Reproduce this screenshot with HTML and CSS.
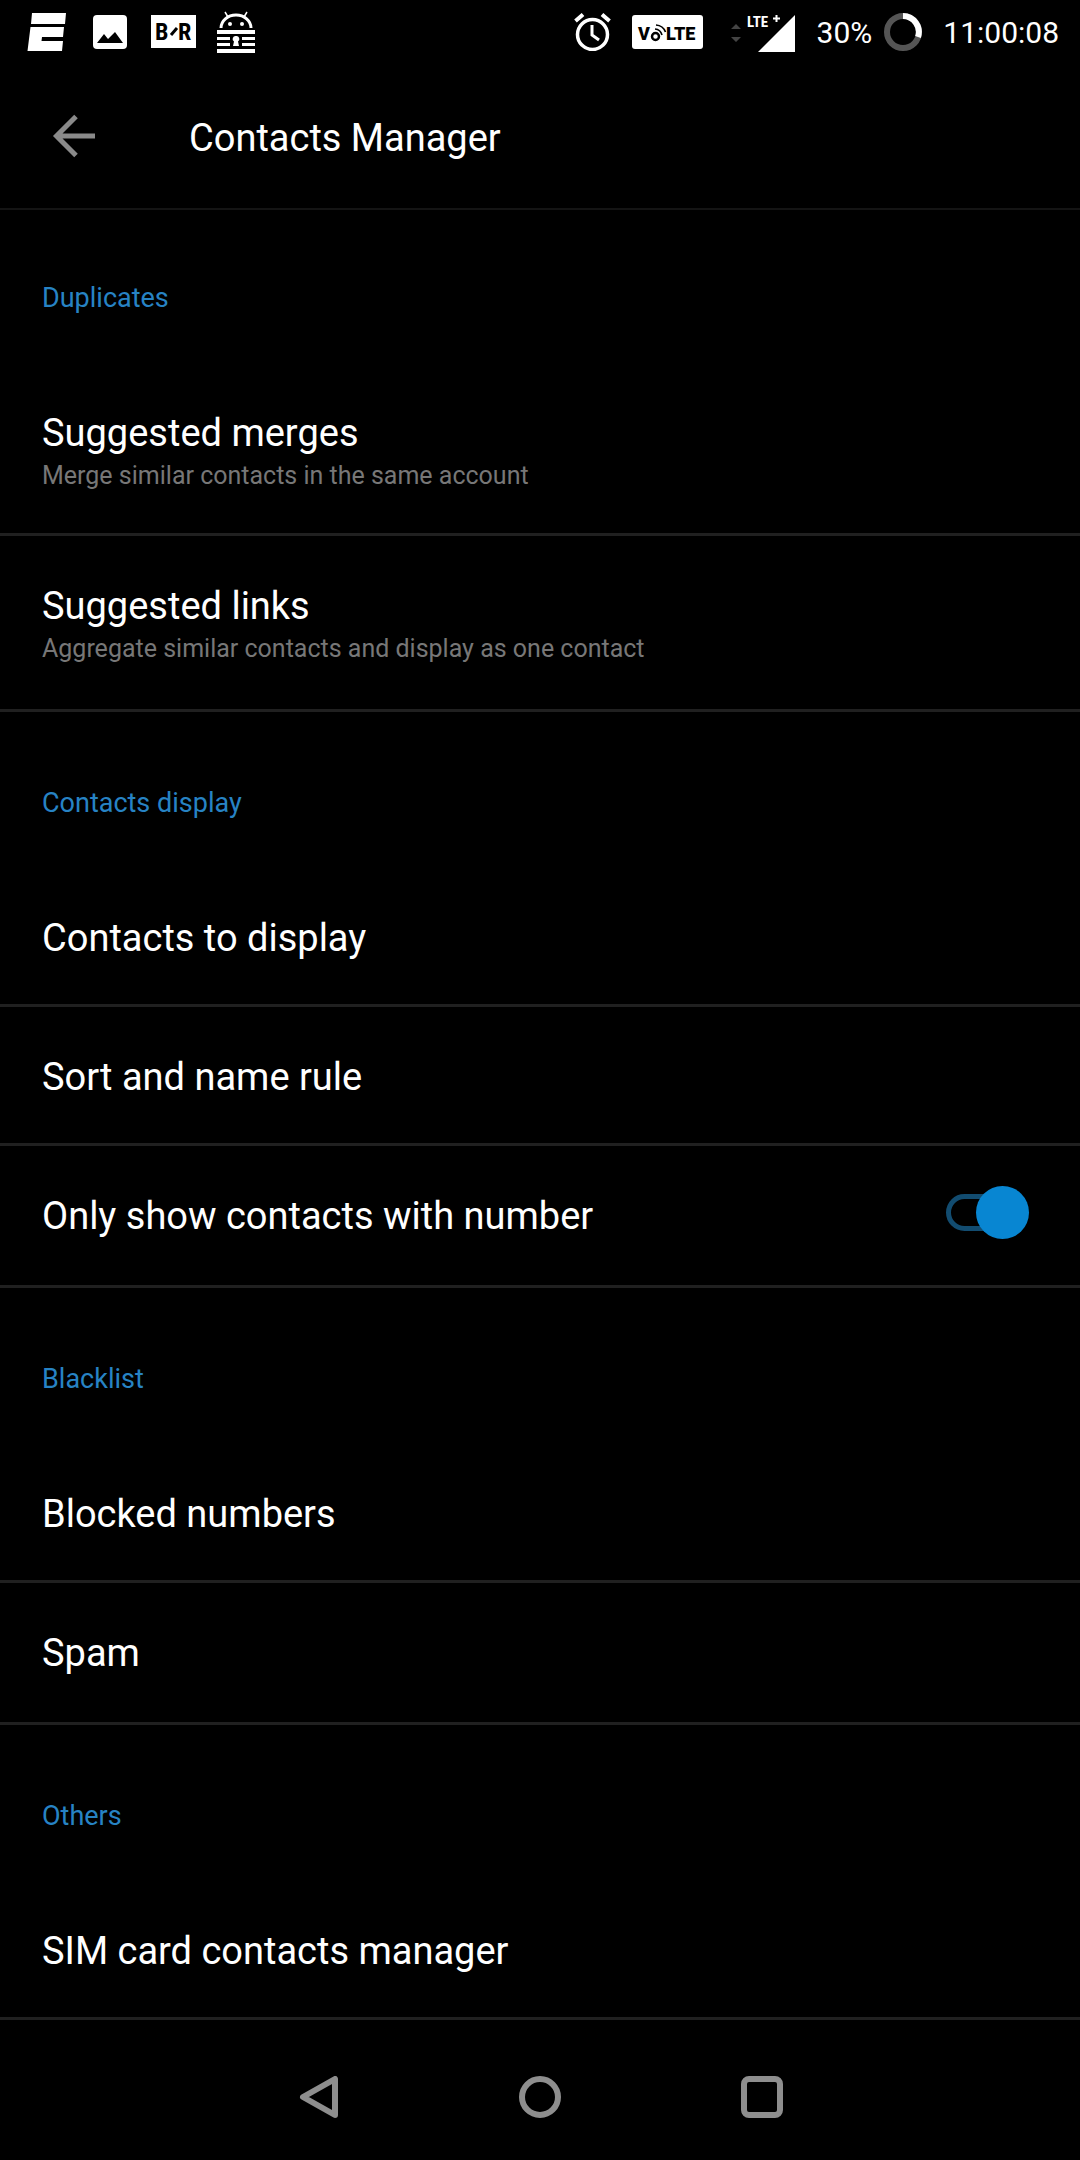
FILE: index.html
```html
<!DOCTYPE html>
<html lang="en">
<head>
<meta charset="utf-8">
<meta name="viewport" content="width=device-width, initial-scale=1">
<title>Contacts Manager</title>
<link rel="stylesheet" href="styles.css">
</head>
<body>
<div class="screen">
  <div class="status">
    <div class="status__notifications">
      <svg width="40" height="40" viewBox="0 0 40 40" fill="#fff" aria-label="Sports">
        <path d="M5 1H39L38 12H4Z M3.500 15H37L36 25H15L14.500 29H36L35 39H0.500Z"/>
      </svg>
      <svg width="34" height="34" viewBox="0 0 34 34" aria-label="Picture">
        <rect width="34" height="34" rx="4" fill="#fff"/>
        <path d="M4 28L11 19L15 24L22 17L30 28Z" fill="#000"/>
      </svg>
      <svg width="45" height="33" viewBox="0 0 45 33" aria-label="B R">
        <rect width="45" height="33" fill="#fff"/>
        <text class="glyph glyph--narrow" x="4" y="25">B</text>
        <path d="M20 20L26 13" stroke="#000" stroke-width="3"/>
        <text class="glyph glyph--narrow" x="27" y="25">R</text>
      </svg>
      <svg width="40" height="42" viewBox="0 0 40 42" aria-label="Android lock">
        <path d="M9 1L12 6M31 1L28 6" stroke="#fff" stroke-width="1.500"/>
        <path d="M5 17A15 13 0 0 1 35 17" fill="none" stroke="#fff" stroke-width="3"/>
        <circle cx="14" cy="13" r="2" fill="#fff"/><circle cx="26" cy="13" r="2" fill="#fff"/>
        <path d="M1 19H39V23H1ZM1 26H39V29H1ZM1 32H39V35H1ZM1 38H39V42H1Z" fill="#fff"/>
        <path d="M14 24H26V36H14Z" fill="#000"/>
        <path d="M20 25a3 3 0 0 1 2 5.500L23 35H17L18 30.500A3 3 0 0 1 20 25Z" fill="#fff"/>
      </svg>
    </div>
    <div class="status__system">
      <svg width="37" height="38" viewBox="0 0 37 38" fill="none" stroke="#fff" aria-label="Alarm">
        <circle cx="18.500" cy="21.500" r="15" stroke-width="3.500"/>
        <path d="M18 12V22L25 27" stroke-width="3"/>
        <path d="M1.500 8L9 1.500M28 1.500L35.500 8" stroke-width="4"/>
      </svg>
      <svg width="71" height="34" viewBox="0 0 71 34" aria-label="VoLTE">
        <rect width="71" height="34" rx="3" fill="#fff"/>
        <text class="glyph" x="6" y="25">V</text>
        <circle cx="23.500" cy="21.500" r="3.500" fill="none" stroke="#000" stroke-width="2.500"/>
        <path d="M23 14Q28.500 14.500 30 20M24 10Q31 10.500 33.500 17" fill="none" stroke="#000" stroke-width="1.700"/>
        <text class="glyph" x="34" y="25">LTE</text>
      </svg>
      <svg class="status__signal" width="66" height="40" viewBox="0 0 66 40" aria-label="LTE+ signal">
        <path d="M1 17L6 12L11 17ZM1 25H11L6 30Z" fill="#444"/>
        <text class="glyph glyph--lte" x="17" y="15">LTE</text>
        <path d="M43 6.500H50M46.500 3V10" stroke="#fff" stroke-width="2"/>
        <path d="M65 3V40H28Z" fill="#fff"/>
      </svg>
      <span class="status__battery">30%</span>
      <svg width="38" height="38" viewBox="0 0 38 38" fill="none" stroke-width="6" aria-label="Battery">
        <circle cx="19" cy="19" r="16" stroke="#555"/>
        <path d="M19 3A16 16 0 0 1 34 24" stroke="#fff"/>
      </svg>
      <time class="status__time">11:00:08</time>
    </div>
  </div>

  <header class="appbar">
    <button class="icon-button" type="button" aria-label="Back">
      <svg width="44" height="44" viewBox="0 0 44 44" fill="none" stroke="#8a8a8a" stroke-width="5">
        <path d="M43 22H5M24 2.500L4.500 22L24 41.500"/>
      </svg>
    </button>
    <h1 class="appbar__title">Contacts Manager</h1>
  </header>

  <main class="settings">
    <section>
      <h2 class="category category--first">Duplicates</h2>
      <button class="row row--double" type="button">
        <span class="row__title">Suggested merges</span>
        <span class="row__summary">Merge similar contacts in the same account</span>
      </button>
      <button class="row row--double row--end" type="button">
        <span class="row__title">Suggested links</span>
        <span class="row__summary">Aggregate similar contacts and display as one contact</span>
      </button>
    </section>
    <section>
      <h2 class="category">Contacts display</h2>
      <button class="row" type="button"><span class="row__title">Contacts to display</span></button>
      <button class="row" type="button"><span class="row__title">Sort and name rule</span></button>
      <div class="row row--switch row--end">
        <label class="row__title" for="only-number">Only show contacts with number</label>
        <input class="switch" id="only-number" type="checkbox" role="switch" checked>
      </div>
    </section>
    <section>
      <h2 class="category">Blacklist</h2>
      <button class="row" type="button"><span class="row__title">Blocked numbers</span></button>
      <button class="row row--end" type="button"><span class="row__title">Spam</span></button>
    </section>
    <section>
      <h2 class="category">Others</h2>
      <button class="row" type="button"><span class="row__title">SIM card contacts manager</span></button>
    </section>
  </main>

  <nav class="navbar" aria-label="System navigation">
    <button class="icon-button" type="button" aria-label="Back">
      <svg width="42" height="42" viewBox="0 0 42 42" fill="none" stroke="#8e8e8e" stroke-width="6" stroke-linejoin="round">
        <path d="M38 3V39L6 21Z"/>
      </svg>
    </button>
    <button class="icon-button" type="button" aria-label="Home">
      <svg width="42" height="42" viewBox="0 0 42 42" fill="none" stroke="#8e8e8e" stroke-width="6">
        <circle cx="21" cy="21" r="18"/>
      </svg>
    </button>
    <button class="icon-button" type="button" aria-label="Recent apps">
      <svg width="42" height="42" viewBox="0 0 42 42" fill="none" stroke="#8e8e8e" stroke-width="6">
        <rect x="3" y="3" width="36" height="36" rx="5"/>
      </svg>
    </button>
  </nav>
</div>
</body>
</html>
```
FILE: styles.css
```css
* {
  box-sizing: border-box;
}

body {
  margin: 0;
  background: #000;
  color: #fff;
  font-family: Roboto, "Liberation Sans", sans-serif;
}

button {
  margin: 0;
  padding: 0;
  border: 0;
  background: none;
  color: inherit;
  font: inherit;
  text-align: left;
}

svg {
  display: block;
  flex: none;
}

.screen {
  display: flex;
  flex-direction: column;
  min-height: 100vh;
}

/* Status bar */
.status {
  display: flex;
  align-items: center;
  justify-content: space-between;
  height: 63px;
  padding: 0 21px 0 27px;
}

.status__notifications {
  display: flex;
  align-items: center;
  gap: 24px;
}

.status__notifications > :first-child {
  margin-right: 2px;
}

.status__notifications > :last-child {
  margin-left: -4px;
}

.status__system {
  display: flex;
  align-items: center;
  font-size: 30px;
  line-height: 36px;
}

.status__system > * + * {
  margin-left: 21px;
}

.status__system > .status__signal {
  margin-left: 27px;
}

.status__system > .status__battery + svg {
  margin-left: 12px;
}

.status__battery,
.status__time {
  padding-top: 3px;
}

.glyph {
  font: 900 18px Roboto, sans-serif;
}

.glyph--narrow {
  font: 700 24px "Liberation Sans Narrow", "Roboto Condensed", Roboto, sans-serif;
}

.glyph--lte {
  font: 700 15px "Liberation Sans Narrow", "Roboto Condensed", Roboto, sans-serif;
  fill: #fff;
}

/* App bar */
.appbar {
  display: flex;
  align-items: center;
  gap: 93px;
  height: 147px;
  padding: 0 52px;
  border-bottom: 2px solid #141414;
}

.appbar__title {
  margin: 0;
  padding-top: 4px;
  font-size: 38px;
  font-weight: 400;
  line-height: 44px;
}

.icon-button {
  display: flex;
  align-items: center;
  justify-content: center;
}

/* Settings list */
.category {
  margin: 0;
  padding: 75px 42px 49px;
  color: #2783c4;
  font-size: 27px;
  font-weight: 400;
  line-height: 32px;
}

.category--first {
  padding-top: 72px;
}

.row {
  display: block;
  width: 100%;
  padding: 48px 42px 44px;
  border-bottom: 3px solid #202020;
}

.row--double {
  padding: 48px 42px 39px;
}

.row--end {
  padding-bottom: 47px;
}

.row--double.row--end {
  padding-bottom: 42px;
}

.row__title,
.row__summary {
  display: block;
}

.row__title {
  font-size: 38px;
  line-height: 44px;
}

.row__summary {
  padding-top: 2px;
  color: #777;
  font-size: 25px;
  line-height: 37px;
}

.row--switch {
  display: flex;
  align-items: flex-start;
  justify-content: space-between;
  padding-right: 51px;
}

/* Switch: outlined track with the thumb laid over its end */
.switch {
  position: relative;
  width: 83px;
  height: 37px;
  margin: 0;
  appearance: none;
}

.switch::before {
  content: "";
  position: absolute;
  inset: 0 12px 0 0;
  border: 5px solid #124c70;
  border-radius: 19px;
}

.switch::after {
  content: "";
  position: absolute;
  top: -8px;
  left: 0;
  width: 53px;
  height: 53px;
  border-radius: 50%;
  background: #777;
}

.switch:checked::after {
  left: 30px;
  background: #0886d2;
}

/* System navigation */
.navbar {
  display: grid;
  grid-template-columns: repeat(3, 42px);
  justify-content: center;
  align-items: center;
  gap: 180px;
  flex: 1;
  min-height: 140px;
  padding-top: 14px;
}
```
